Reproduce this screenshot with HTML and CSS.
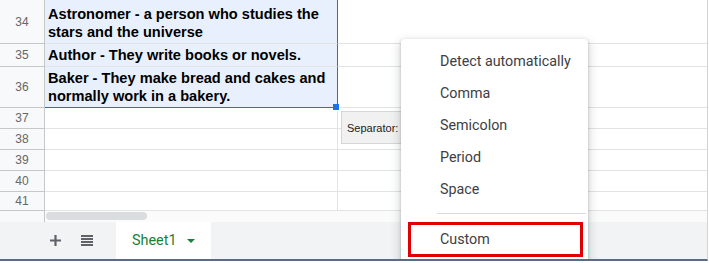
FILE: index.html
```html
<!DOCTYPE html>
<html lang="en">
<head>
  <meta charset="UTF-8">
  <title>Split text to columns</title>
  <link rel="stylesheet" href="styles.css">
</head>
<body>
  <div class="sheet">
    <div class="grid">
      <div class="row r44">
        <div class="rh">34</div>
        <div class="cell sel">Astronomer - a person who studies the stars and the universe</div>
        <div class="cell"></div>
      </div>
      <div class="row r23">
        <div class="rh">35</div>
        <div class="cell sel">Author - They write books or novels.</div>
        <div class="cell"></div>
      </div>
      <div class="row r41">
        <div class="rh">36</div>
        <div class="cell sel sel-last">Baker - They make bread and cakes and normally work in a bakery.</div>
        <div class="cell"></div>
      </div>
      <div class="row r21">
        <div class="rh">37</div>
        <div class="cell"></div>
        <div class="cell"></div>
      </div>
      <div class="row r21">
        <div class="rh">38</div>
        <div class="cell"></div>
        <div class="cell"></div>
      </div>
      <div class="row r21">
        <div class="rh">39</div>
        <div class="cell"></div>
        <div class="cell"></div>
      </div>
      <div class="row r21">
        <div class="rh">40</div>
        <div class="cell"></div>
        <div class="cell"></div>
      </div>
      <div class="row r19">
        <div class="rh">41</div>
        <div class="cell"></div>
        <div class="cell"></div>
      </div>
    </div>

    <div class="hscroll">
      <div class="hscroll-corner"></div>
      <div class="hscroll-track"><div class="thumb"></div></div>
    </div>

    <div class="tabs">
      <div class="tab-btn">
        <svg width="11" height="11" viewBox="0 0 11 11"><path d="M5.5 0v11M0 5.5h11" stroke="#5f6368" stroke-width="2.2"/></svg>
      </div>
      <div class="tab-btn">
        <svg width="12" height="11" viewBox="0 0 12 11"><path d="M0 1h12M0 4h12M0 7h12M0 10h12" stroke="#5f6368" stroke-width="2"/></svg>
      </div>
      <div class="sheet-tab">
        <span>Sheet1</span>
        <svg width="8" height="4" viewBox="0 0 8 4"><path d="M0 0h8L4 4z" fill="#188038"/></svg>
      </div>
    </div>

    <div class="handle"></div>

    <div class="separator-box">Separator:</div>

    <div class="menu">
      <div class="menu-item">Detect automatically</div>
      <div class="menu-item">Comma</div>
      <div class="menu-item">Semicolon</div>
      <div class="menu-item">Period</div>
      <div class="menu-item">Space</div>
      <div class="menu-sep"></div>
      <div class="menu-item custom">Custom</div>
    </div>
  </div>
</body>
</html>
```

FILE: styles.css
```css
body {
  margin: 0;
  background: #fff;
  overflow: hidden;
}
.sheet {
  position: relative;
  width: 708px;
  height: 261px;
  box-sizing: border-box;
  border-right: 1px solid #d4d4d4;
  border-bottom: 2px solid #5d6a86;
  display: flex;
  flex-direction: column;
  font-family: "Liberation Sans", Arial, sans-serif;
  overflow: hidden;
}
.row {
  display: grid;
  grid-template-columns: 45px 293px 1fr;
}
.r44 { height: 44px; }
.r23 { height: 23px; }
.r41 { height: 41px; }
.r21 { height: 21px; }
.r19 { height: 19px; }

.rh {
  box-sizing: border-box;
  background: #f8f9fa;
  border-right: 1px solid #c7c7c7;
  border-bottom: 1px solid #c7c7c7;
  color: #666;
  font-size: 12px;
  display: flex;
  align-items: center;
  justify-content: center;
}
.cell {
  box-sizing: border-box;
  border-right: 1px solid #e2e3e3;
  border-bottom: 1px solid #e2e3e3;
  font-size: 14.6px;
  font-weight: bold;
  line-height: 18px;
  color: #000;
  padding: 0 3px 2px;
  display: flex;
  align-items: flex-end;
}
.cell:last-child {
  border-right: none;
}
.cell.sel {
  background: #e8f0fe;
  border-right: 1px solid #1a73e8;
}
.cell.sel-last {
  border-bottom: 1px solid #1a73e8;
}

.hscroll {
  display: grid;
  grid-template-columns: 45px 1fr;
  height: 11px;
}
.hscroll-corner {
  background: #f8f9fa;
  border-right: 1px solid #c7c7c7;
}
.hscroll-track {
  background: #fbfbfb;
  padding: 1px 0 0 1px;
}
.thumb {
  width: 101px;
  height: 8px;
  border-radius: 4px;
  background: #dadce0;
}

.tabs {
  flex: 1;
  background: #f1f3f4;
  display: flex;
  align-items: stretch;
  padding-left: 40px;
}
.tab-btn {
  width: 31px;
  display: flex;
  align-items: center;
  justify-content: center;
}
.sheet-tab {
  margin-left: 14px;
  width: 95px;
  background: #fff;
  display: flex;
  align-items: center;
  gap: 10px;
  padding-left: 16px;
  box-sizing: border-box;
  font-family: Roboto, "Liberation Sans", sans-serif;
  font-size: 14.4px;
  color: #188038;
}

.handle {
  position: absolute;
  left: 333px;
  top: 104px;
  width: 6px;
  height: 6px;
  background: #1a73e8;
  border: 1px solid #fff;
  border-left: none;
  border-top: none;
}

.separator-box {
  position: absolute;
  left: 341px;
  top: 111px;
  width: 90px;
  height: 33px;
  box-sizing: border-box;
  background: #f1f1f1;
  border: 1px solid #d6d6d6;
  font-size: 11px;
  color: #222;
  padding-left: 5px;
  display: flex;
  align-items: center;
}

.menu {
  position: absolute;
  left: 401px;
  top: 39px;
  width: 187px;
  height: 240px;
  background: #fff;
  border-radius: 4px;
  box-shadow: 0 1px 3px rgba(60, 64, 67, 0.3), 0 4px 8px 3px rgba(60, 64, 67, 0.15);
  padding-top: 6px;
  box-sizing: border-box;
  font-family: Roboto, "Liberation Sans", sans-serif;
  font-size: 14.3px;
  color: #3c4043;
}
.menu-item {
  height: 32px;
  display: flex;
  align-items: center;
  padding-left: 39px;
}
.menu-sep {
  height: 1px;
  background: #dadce0;
  margin: 8px 2px 8px 36px;
}
.menu-item.custom {
  height: 35px;
  margin: 0 5px 0 7px;
  padding: 0 0 2px 29px;
  border: 3px solid #e00000;
  box-sizing: border-box;
}
```
